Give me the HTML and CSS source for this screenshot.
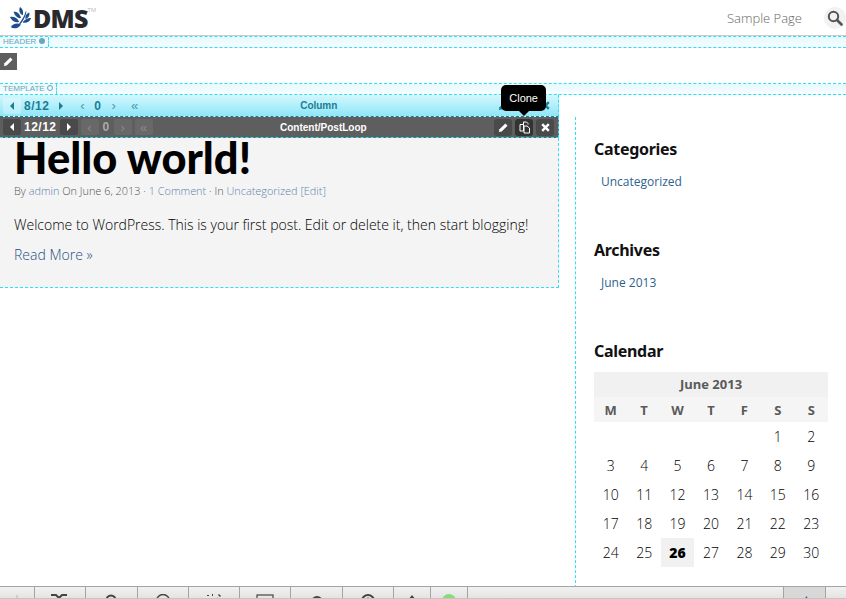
FILE: index.html
```html
<!DOCTYPE html>
<html lang="en">
<head>
    <meta charset="UTF-8">
    <title>DMS</title>
    <link rel="stylesheet" href="styles.css">
</head>
<body>
<div class="page">

    <header class="topnav">
        <a class="logo">
            <svg class="logo-mark" width="23" height="24" viewBox="0 0 25 26">
                <path fill="#1f4e8c" d="M11 19 C14 15 17 11 18 6 L19 6 C18 12 15 17 12 20 Z"/>
                <path fill="#1f4e8c" d="M12 1 C15 3 16 6 15 10 C12 9 10 5 12 1 Z"/>
                <path fill="#1f4e8c" d="M5 6 C9 6 12 9 13 13 C9 14 6 10 5 6 Z"/>
                <path fill="#1f4e8c" d="M22 7 C23 10 21 13 18 14 C17 11 19 8 22 7 Z"/>
                <path fill="#1f4e8c" d="M1 12 C5 11 9 13 11 17 C7 19 3 16 1 12 Z"/>
                <path fill="#1f4e8c" d="M24 13 C23 17 19 19 15 18 C16 15 20 13 24 13 Z"/>
                <path fill="#1f4e8c" d="M2 23 C4 19 9 18 13 20 C10 25 5 25 2 23 Z"/>
            </svg>
            <span class="logo-text">DMS</span><span class="logo-tm">TM</span>
        </a>
        <nav class="topnav-right">
            <a class="nav-link">Sample Page</a>
            <span class="search-btn">
                <svg width="16" height="16" viewBox="0 0 16 16">
                    <circle cx="6.5" cy="6.5" r="4.7" fill="none" stroke="#555" stroke-width="2"/>
                    <path d="M10 10 L14.5 14.5" stroke="#555" stroke-width="2.6" stroke-linecap="round"/>
                </svg>
            </span>
        </nav>
    </header>

    <section class="area area-header">
        <span class="area-label">HEADER <i class="label-dot"></i></span>
    </section>
    <div class="area-body">
        <span class="edit-tab">
            <svg width="11" height="11" viewBox="0 0 12 12"><path fill="#fff" d="M1 11 L1.6 8 L8 1.6 L10.4 4 L4 10.4 Z"/></svg>
        </span>
    </div>

    <section class="area area-template">
        <span class="area-label">TEMPLATE <i class="label-pin"></i></span>
    </section>

    <div class="columns">
        <main class="main-col">
            <div class="bar bar-column">
                <div class="bar-controls">
                    <span class="ctl ctl-wide"><i class="arrow-left"></i></span>
                    <span class="ctl-value">8/12</span>
                    <span class="ctl"><i class="arrow-right"></i></span>
                    <span class="ctl chev">&lsaquo;</span>
                    <span class="ctl-value">0</span>
                    <span class="ctl chev">&rsaquo;</span>
                    <span class="ctl chev">&laquo;</span>
                </div>
                <span class="bar-title">Column</span>
                <div class="bar-actions">
                    <span class="act act-plain">
                        <svg width="11" height="11" viewBox="0 0 12 12"><path fill="#1a7d96" d="M1 11 L1.6 8 L8 1.6 L10.4 4 L4 10.4 Z"/></svg>
                    </span>
                    <span class="act act-plain"></span>
                    <span class="act act-plain">
                        <svg width="9" height="9" viewBox="0 0 9 9"><path d="M1.2 1.2 L7.8 7.8 M7.8 1.2 L1.2 7.8" stroke="#1a7d96" stroke-width="2.4"/></svg>
                    </span>
                </div>
            </div>

            <div class="bar bar-content">
                <div class="bar-controls">
                    <span class="ctl ctl-dark"><i class="arrow-left"></i></span>
                    <span class="ctl-value">12/12</span>
                    <span class="ctl ctl-dark"><i class="arrow-right"></i></span>
                    <span class="ctl ctl-dark chev">&lsaquo;</span>
                    <span class="ctl-value ctl-offset">0</span>
                    <span class="ctl ctl-dark chev">&rsaquo;</span>
                    <span class="ctl ctl-dark chev">&laquo;</span>
                </div>
                <span class="bar-title">Content/PostLoop</span>
                <div class="bar-actions">
                    <span class="act">
                        <svg width="11" height="11" viewBox="0 0 12 12"><path fill="#fff" d="M1 11 L1.6 8 L8 1.6 L10.4 4 L4 10.4 Z"/></svg>
                    </span>
                    <span class="act act-on">
                        <svg width="13" height="13" viewBox="0 0 13 13" fill="none" stroke="#fff">
                            <path d="M5.5 3.5 V1 H8.5 L10 2.5 V3.5"/>
                            <path d="M2 3.5 H5.5 V10 H2 Z"/>
                            <path d="M6 5 H9 L11.5 7 V12 H6 Z"/>
                        </svg>
                    </span>
                    <span class="act">
                        <svg width="9" height="9" viewBox="0 0 9 9"><path d="M1.2 1.2 L7.8 7.8 M7.8 1.2 L1.2 7.8" stroke="#fff" stroke-width="2.4"/></svg>
                    </span>
                </div>
                <span class="tooltip">Clone</span>
            </div>

            <article class="post">
                <h1 class="post-title">Hello world!</h1>
                <p class="post-meta">By <a>admin</a> On June 6, 2013 &middot; <a>1 Comment</a> &middot; In <a>Uncategorized</a> <a>[Edit]</a></p>
                <p class="post-text">Welcome to WordPress. This is your first post. Edit or delete it, then start blogging!</p>
                <a class="read-more">Read More &raquo;</a>
            </article>
        </main>

        <aside class="sidebar">
            <div class="widget">
                <h3>Categories</h3>
                <a class="widget-link">Uncategorized</a>
            </div>
            <div class="widget">
                <h3>Archives</h3>
                <a class="widget-link">June 2013</a>
            </div>
            <div class="widget">
                <h3>Calendar</h3>
                <table class="calendar">
                    <caption>June 2013</caption>
                    <thead>
                        <tr><th>M</th><th>T</th><th>W</th><th>T</th><th>F</th><th>S</th><th>S</th></tr>
                    </thead>
                    <tbody>
                        <tr><td></td><td></td><td></td><td></td><td></td><td>1</td><td>2</td></tr>
                        <tr><td>3</td><td>4</td><td>5</td><td>6</td><td>7</td><td>8</td><td>9</td></tr>
                        <tr><td>10</td><td>11</td><td>12</td><td>13</td><td>14</td><td>15</td><td>16</td></tr>
                        <tr><td>17</td><td>18</td><td>19</td><td>20</td><td>21</td><td>22</td><td>23</td></tr>
                        <tr><td>24</td><td>25</td><td class="today">26</td><td>27</td><td>28</td><td>29</td><td>30</td></tr>
                    </tbody>
                </table>
            </div>
        </aside>
    </div>

    <footer class="toolbar">
        <span class="tool tool-first"><svg width="16" height="16" viewBox="0 0 16 16"><path fill="none" stroke="#bbb" stroke-width="1.5" d="M8 1 V15 M2 6 H14"/></svg></span>
        <span class="tool"><svg width="20" height="16" viewBox="0 4 20 16"><path fill="none" stroke="#444" stroke-width="2" d="M1 5 H6 L12 11 H17 M1 11 H6 L12 5 H17"/></svg></span>
        <span class="tool"><svg width="14" height="16" viewBox="0 1 14 16"><circle cx="7" cy="7" r="4.5" fill="none" stroke="#444" stroke-width="2"/></svg></span>
        <span class="tool"><svg width="16" height="16" viewBox="0 1 16 16"><circle cx="8" cy="8" r="6.5" fill="none" stroke="#444" stroke-width="1.4"/></svg></span>
        <span class="tool"><svg width="18" height="16" viewBox="0 0 18 16"><path fill="none" stroke="#444" stroke-width="1.6" d="M5 14 L13 4"/><path fill="#444" d="M2 1 h2 v1 h-2 z M7 0 h1 v2 h-1 z M14 0 l2 2 -1 1 -2 -2 z"/></svg></span>
        <span class="tool"><svg width="18" height="16" viewBox="0 2 18 16"><rect x="1" y="3" width="16" height="12" fill="none" stroke="#444" stroke-width="1.2"/></svg></span>
        <span class="tool"><svg width="14" height="16" viewBox="0 0 14 16"><circle cx="7" cy="8" r="6" fill="#444"/></svg></span>
        <span class="tool"><svg width="16" height="16" viewBox="0 1 16 16"><circle cx="8" cy="8" r="6" fill="none" stroke="#444" stroke-width="2"/><circle cx="8" cy="6" r="1.5" fill="#444"/></svg></span>
        <span class="tool tool-small"><svg width="12" height="16" viewBox="0 1 12 16"><path fill="#444" d="M6 2 L10 7 H7.5 V12 H4.5 V7 H2 Z"/></svg></span>
        <span class="tool tool-small"><i class="status-dot"></i></span>
        <span class="tool tool-fill"></span>
        <span class="tool tool-active"><svg width="14" height="16" viewBox="0 2 14 16"><path fill="#2a63a8" d="M3 10 L9 4 L10 9 Z"/></svg></span>
        <span class="tool tool-last"></span>
    </footer>

</div>
</body>
</html>
```

FILE: styles.css
```css
html, body {
    margin: 0;
    height: 100%;
    overflow: hidden;
}

body {
    font-family: 'Open Sans', sans-serif;
    font-weight: 300;
    color: #000;
    background-color: #fff;
}

.page {
    height: 599px;
    display: flex;
    flex-direction: column;
    overflow: hidden;
}

/* Top navigation */
.topnav {
    height: 35px;
    flex: none;
    display: flex;
    justify-content: space-between;
    align-items: center;
    padding: 0 0 0 9px;
    border-bottom: 1px solid #ccc;
}

.logo {
    display: flex;
    align-items: center;
    height: 30px;
}

.logo-mark {
    margin-right: 1px;
}

.logo-text {
    font-weight: 800;
    font-size: 25px;
    letter-spacing: -0.8px;
    color: #2a2a2e;
}

.logo-tm {
    font-size: 6px;
    font-weight: 400;
    color: #bbb;
    align-self: flex-start;
    margin-top: 3px;
}

.topnav-right {
    display: flex;
    align-items: center;
    gap: 22px;
}

.nav-link {
    font-size: 13px;
    color: #666;
}

.search-btn {
    width: 22px;
    height: 22px;
    border-radius: 50%;
    background-color: #f2f2f2;
    display: flex;
    align-items: center;
    justify-content: center;
}

/* Editor areas */
.area {
    flex: none;
    background: linear-gradient(#e6f9fd, #f7fdff);
    border-top: 1px dashed #2fe0f5;
    border-bottom: 1px dashed #2fe0f5;
    height: 10px;
    display: flex;
}

.area-label {
    font-family: 'Liberation Sans', sans-serif;
    font-weight: 400;
    font-size: 8px;
    line-height: 10px;
    color: #6aa6bb;
    padding: 0 3px;
    border-right: 1px dashed #2fe0f5;
    height: 10px;
}

.label-dot {
    display: inline-block;
    width: 6px;
    height: 6px;
    border-radius: 50%;
    background-color: #6aa6bb;
}

.label-pin {
    display: inline-block;
    width: 4px;
    height: 4px;
    border: 1px solid #6aa6bb;
    border-radius: 50%;
}

.area-body {
    height: 35px;
    flex: none;
    padding-top: 5px;
    box-sizing: border-box;
}

.edit-tab {
    width: 17px;
    height: 17px;
    background-color: #5e5e5e;
    display: flex;
    align-items: center;
    justify-content: center;
}

.columns {
    flex: 1;
    min-height: 0;
    display: grid;
    grid-template-columns: 559px 1fr;
}

/* Section bars */
.bar {
    box-sizing: border-box;
    display: flex;
    align-items: center;
    position: relative;
    font-family: 'Liberation Sans', sans-serif;
    font-weight: 700;
    border-right: 1px dashed #2fe0f5;
}

.bar-column {
    background: linear-gradient(#d3f7fd, #8fe6f8);
    color: #1a7d96;
    border-bottom: 1px dashed #1a7d96;
    height: 22px;
}

.bar-content {
    background-color: #5e5e5e;
    color: #fff;
    border-bottom: 1px dashed #2fe0f5;
    height: 21px;
}

.bar-controls {
    display: flex;
    align-items: center;
    padding-left: 3px;
    gap: 3px;
}

.ctl {
    width: 18px;
    height: 16px;
    border-radius: 2px;
    display: flex;
    align-items: center;
    justify-content: center;
    font-size: 13px;
    font-weight: 400;
}

.ctl-dark {
    background-color: #4a4a4a;
}

.ctl-wide {
    background-color: rgba(255, 255, 255, 0.3);
}

.ctl.chev {
    opacity: 0.75;
}

.bar-content .chev {
    color: #999;
    background-color: #6c6c6c;
}

.ctl-value {
    font-size: 12px;
    letter-spacing: 0.5px;
}

.ctl-offset {
    color: #aaa;
    margin: 0 1px;
}

.arrow-left {
    border: 4px solid transparent;
    border-left-width: 0;
    border-right: 4px solid currentColor;
}

.arrow-right {
    border: 4px solid transparent;
    border-right-width: 0;
    border-left: 4px solid currentColor;
}

.bar-title {
    flex: 1;
    text-align: center;
    font-size: 10px;
}

.bar-actions {
    display: flex;
    gap: 3px;
    padding-right: 4px;
}

.act {
    width: 18px;
    height: 17px;
    background-color: #4a4a4a;
    border-radius: 3px;
    display: flex;
    align-items: center;
    justify-content: center;
}

.act-on {
    background-color: #333;
}

.act-plain {
    background-color: transparent;
}

.tooltip {
    position: absolute;
    right: 12px;
    top: -32px;
    background-color: #000;
    color: #fff;
    font-size: 11px;
    font-weight: 400;
    padding: 0 8px;
    line-height: 26px;
    border-radius: 5px;
}

.tooltip::after {
    content: "";
    position: absolute;
    left: 50%;
    bottom: -5px;
    margin-left: -5px;
    border-top: 5px solid #000;
    border-left: 5px solid transparent;
    border-right: 5px solid transparent;
}

/* Post */
.post {
    height: 150px;
    box-sizing: border-box;
    background-color: #f4f4f4;
    padding: 0 14px;
    border-right: 1px dashed #2fe0f5;
    border-bottom: 1px dashed #2fe0f5;
}

.post-title {
    margin: 0;
    font-family: 'Lato', sans-serif;
    font-size: 43.4px;
    line-height: 38px;
    font-weight: 900;
    color: #000;
}

.post-meta {
    margin: 6px 0 0;
    font-size: 10.9px;
    line-height: 18px;
    color: #555;
}

.post-meta a {
    color: #5c85b0;
}

.post-text {
    margin: 15px 0 0;
    font-size: 14px;
    line-height: 20px;
}

.read-more {
    display: block;
    margin-top: 10px;
    font-size: 14px;
    line-height: 20px;
    color: #1f5088;
}

/* Sidebar */
.sidebar {
    margin-left: 16px;
    padding: 21px 18px 0 18px;
    margin-top: 22px;
    border-left: 1px dashed #2fe0f5;
}

.widget {
    margin-bottom: 46px;
}

.widget h3 {
    margin: 0 0 11px;
    font-family: 'Noto Sans', sans-serif;
    font-size: 16px;
    line-height: 22px;
    font-weight: 700;
    letter-spacing: -0.3px;
    color: #111;
}

.widget-link {
    display: block;
    padding-left: 7px;
    font-size: 12px;
    line-height: 22px;
    font-weight: 400;
    color: #2f5f90;
}

.calendar {
    width: 234px;
    margin-top: -1px;
    border-collapse: collapse;
    table-layout: fixed;
    font-size: 14px;
}

.calendar caption {
    background-color: #f1f1f1;
    font-weight: 700;
    font-size: 13px;
    color: #5a5a5a;
    line-height: 25px;
}

.calendar th {
    background-color: #f5f5f5;
    font-weight: 700;
    font-size: 13px;
    color: #5a5a5a;
    height: 25px;
    padding: 0;
}

.calendar td {
    height: 29px;
    padding: 0;
    text-align: center;
    font-weight: 300;
}

.calendar .today {
    background-color: #f1f1f1;
    font-weight: 800;
    color: #000;
}

/* Bottom toolbar */
.toolbar {
    height: 13px;
    box-sizing: border-box;
    flex: none;
    display: flex;
    background: linear-gradient(#f1f1f1, #e4e4e4);
    border-top: 1px solid #a4a4a4;
    border-bottom: 1px solid #c4c4c4;
    overflow: hidden;
}

.tool {
    width: 51.3px;
    box-sizing: border-box;
    flex: none;
    border-right: 1px solid #a4a4a4;
    display: flex;
    justify-content: center;
    align-items: flex-start;
    padding-top: 7px;
    overflow: hidden;
}

.tool-first {
    width: 35px;
}

.tool-first svg {
    opacity: 0.7;
}

.tool-small {
    width: 37px;
}

.tool-fill {
    flex: 1;
}

.tool-active {
    width: 42px;
    background-color: #d8d8d8;
}

.tool-last {
    width: 20px;
    border-right: 0;
}

.status-dot {
    width: 14px;
    height: 14px;
    border-radius: 50%;
    background-color: #86dc7a;
}
```
